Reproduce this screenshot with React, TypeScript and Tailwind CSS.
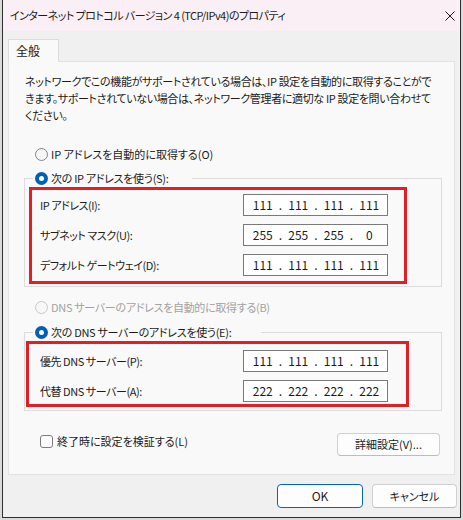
import React from 'react';

const jp = "font-['Noto_Sans_CJK_JP','Noto_Sans',sans-serif] [font-feature-settings:'palt']";

function Radio({ checked = false, disabled = false }: { checked?: boolean; disabled?: boolean }) {
  if (checked) {
    return (
      <span className="flex items-center justify-center w-[13px] h-[13px] rounded-full bg-[#005fb8] shrink-0">
        <span className="w-[5px] h-[5px] rounded-full bg-white" />
      </span>
    );
  }
  return (
    <span
      className={`w-[13px] h-[13px] rounded-full border shrink-0 ${
        disabled ? 'border-[#c8c8c8] bg-[#f7f7f7]' : 'border-[#858585] bg-[#f6f6f6]'
      }`}
    />
  );
}

function RadioRow({
  label,
  checked,
  disabled,
  tight,
}: {
  label: string;
  checked?: boolean;
  disabled?: boolean;
  tight?: boolean;
}) {
  return (
    <div className={`flex items-center gap-[3px] h-[18px] whitespace-nowrap ${disabled ? 'text-[#a2a2a2]' : ''}`}>
      <Radio checked={checked} disabled={disabled} />
      <span className={tight ? 'tracking-[-0.3px]' : ''}>{label}</span>
    </div>
  );
}

function IpBox({ parts }: { parts: string[] }) {
  return (
    <div className="flex items-center w-[145px] h-[22px] border border-[#7a7a7a] bg-white pl-px text-[12px]">
      {parts.map((p, i) => (
        <React.Fragment key={i}>
          <span className="w-[36px] text-center">{p}</span>
          {i < parts.length - 1 && <span className="w-0 flex justify-center">.</span>}
        </React.Fragment>
      ))}
    </div>
  );
}

function FieldRow({ label, parts }: { label: string; parts: string[] }) {
  return (
    <div className="flex items-center justify-between whitespace-nowrap">
      <span className="tracking-[-0.45px]">{label}</span>
      <IpBox parts={parts} />
    </div>
  );
}

export default function App() {
  return (
    <div className={`w-[463px] h-[520px] bg-[#dadada] pl-[2px] overflow-hidden text-[11px] text-[#1b1b1b] ${jp}`}>
      <div className="w-[459px] h-[518px] border-x border-b border-[#2e2e2e] bg-[#f0f0f0] flex flex-col">
        {/* Title bar */}
        <div className="h-[31px] bg-[#f9eff4] flex items-center justify-between pl-[7px] pr-[4px] shrink-0">
          <span className="whitespace-nowrap tracking-[-0.55px]">
            インターネット プロトコル バージョン 4 (TCP/IPv4)のプロパティ
          </span>
          <svg width="10" height="10" viewBox="0 0 10 10" className="mr-px">
            <path d="M0.5 0.5 L9.5 9.5 M9.5 0.5 L0.5 9.5" stroke="#1b1b1b" strokeWidth="1" />
          </svg>
        </div>

        <div className="pt-[8px] pl-[5px] pr-[3px]">
          {/* Tab */}
          <div className="relative z-10 -mb-px w-[51px] h-[23px] border-t border-x border-[#dcdcdc] bg-[#f9f9f9] pl-[7px] leading-[21px] text-[12px]">
            全般
          </div>

          {/* Panel */}
          <div className="w-[447px] h-[414px] border border-[#e2e2e2] bg-[#f9f9f9]">
            <p className="pl-[16px] pt-[11px] leading-[17px] whitespace-nowrap tracking-[-0.35px]">
              ネットワークでこの機能がサポートされている場合は、IP 設定を自動的に取得することがで
              <br />
              きます。サポートされていない場合は、ネットワーク管理者に適切な IP 設定を問い合わせて
              <br />
              ください。
            </p>

            <div className="mt-[21px] pl-[26px]">
              <RadioRow label="IP アドレスを自動的に取得する(O)" />
            </div>

            <fieldset className="mt-[6px] ml-[15px] w-[418px] border border-[#dcdcdc] pb-[2px]">
              <legend className="ml-[8px] pl-[2px] w-[159px]">
                <RadioRow label="次の IP アドレスを使う(S):" checked tight />
              </legend>
              <div className="ml-[4px] w-[378px] border-[3px] border-[#e41e25] pt-[4px] pb-[5px] pl-[8px] pr-[16px] flex flex-col gap-[8px]">
                <FieldRow label="IP アドレス(I):" parts={['111', '111', '111', '111']} />
                <FieldRow label="サブネット マスク(U):" parts={['255', '255', '255', '0']} />
                <FieldRow label="デフォルト ゲートウェイ(D):" parts={['111', '111', '111', '111']} />
              </div>
            </fieldset>

            <div className="mt-[11px] pl-[26px]">
              <RadioRow label="DNS サーバーのアドレスを自動的に取得する(B)" disabled tight />
            </div>

            <fieldset className="mt-[7px] ml-[15px] w-[418px] border border-[#dcdcdc] pb-[3px]">
              <legend className="ml-[8px] pl-[2px] w-[228px]">
                <RadioRow label="次の DNS サーバーのアドレスを使う(E):" checked tight />
              </legend>
              <div className="ml-px w-[383px] border-[3px] border-[#e41e25] pt-[6px] pb-[2px] pl-[11px] pr-[18px] flex flex-col gap-[8px]">
                <FieldRow label="優先 DNS サーバー(P):" parts={['111', '111', '111', '111']} />
                <FieldRow label="代替 DNS サーバー(A):" parts={['222', '222', '222', '222']} />
              </div>
            </fieldset>

            <div className="mt-[22px] pl-[31px] pr-[14px] flex items-start justify-between">
              <label className="-mt-px h-[18px] flex items-center gap-[4px] whitespace-nowrap">
                <span className="w-[13px] h-[13px] rounded-[3px] border border-[#7c7c7c] bg-[#fbfbfb]" />
                終了時に設定を検証する(L)
              </label>
              <button className="w-[103px] h-[23px] rounded-[4px] border border-[#d0d0d0] border-b-[#bcbcbc] bg-[#fdfdfd] whitespace-nowrap">
                詳細設定(V)...
              </button>
            </div>
          </div>

          {/* Footer buttons */}
          <div className="mt-[9px] flex justify-end gap-[9px]">
            <button className="w-[86px] h-[24px] rounded-[4px] border border-[#0067c0] bg-[#fdfdfd] text-[12px]">OK</button>
            <button className="w-[85px] h-[24px] rounded-[4px] border border-[#d0d0d0] border-b-[#bcbcbc] bg-[#fdfdfd]">
              キャンセル
            </button>
          </div>
        </div>
      </div>
    </div>
  );
}
